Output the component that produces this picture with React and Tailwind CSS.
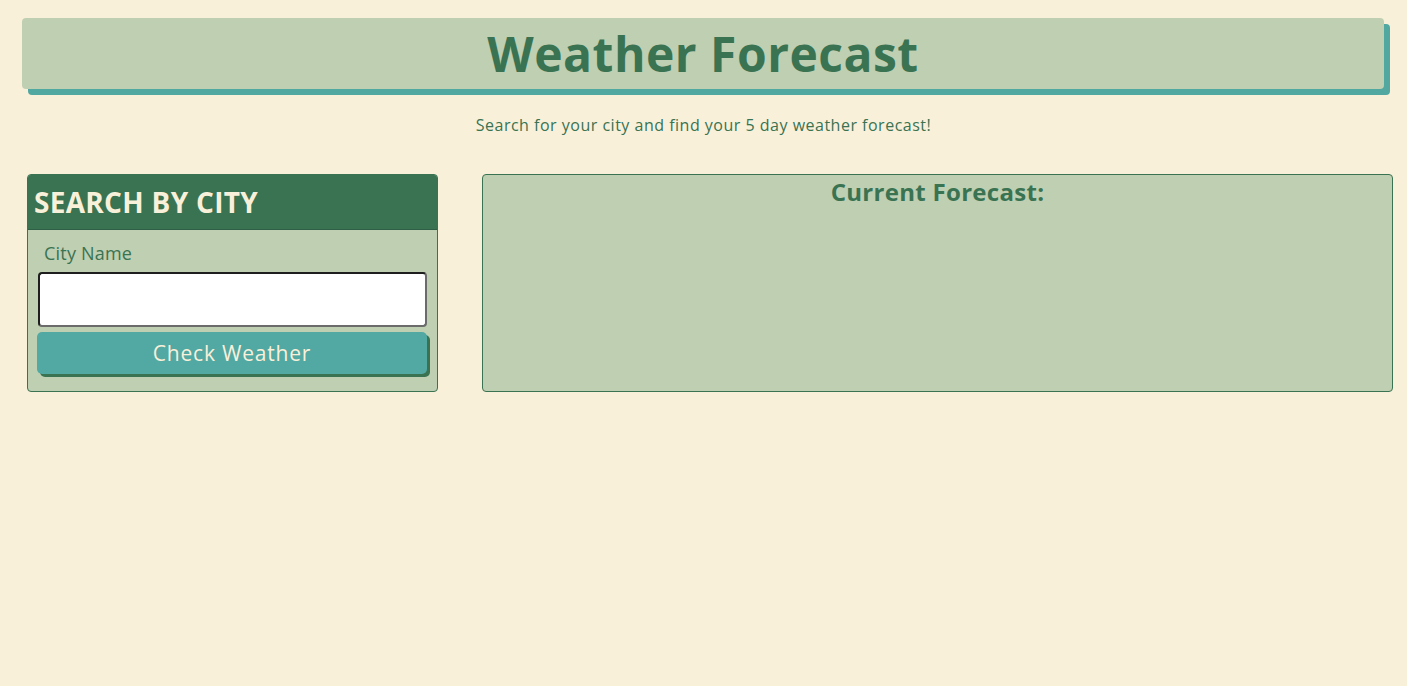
export default function App() {
  return (
    <div className="min-h-screen w-full bg-[#f9f0da] pt-[18px]" style={{ fontFamily: '"Open Sans", "Noto Sans", sans-serif' }}>
      <header className="ml-[22px] mr-[23px] h-[71px] rounded-[4px] bg-[#bfcfb2] shadow-[6px_6px_0_0_#50a8a0] flex items-center justify-center">
        <h1 className="text-[48px] font-bold text-[#3a7352] leading-none tracking-[0.5px]">Weather Forecast</h1>
      </header>
      <p className="mt-[26px] text-center text-[16px] text-[#3a7352] leading-[20px] tracking-[0.5px]">Search for your city and find your 5 day weather forecast!</p>
      <div className="mt-[39px] flex items-start pl-[27px] pr-[14px] gap-[44px]">
        <section className="w-[411px] h-[218px] shrink-0 rounded-[4px] border border-[#3a7352] bg-[#bfcfb2] overflow-hidden">
          <div className="h-[55px] bg-[#3a7352] border-b border-[#2f6045] flex items-center px-[6px]">
            <h2 className="text-[28px] font-bold text-[#f9f0da] leading-none tracking-[0.3px]">SEARCH BY CITY</h2>
          </div>
          <div className="px-[10px] pt-[12px]">
            <label className="block pl-[6px] text-[18px] text-[#3a7352] leading-[22px] tracking-[0.2px]">City Name</label>
            <input className="mt-[8px] block w-[389px] h-[55px] bg-white rounded-[4px] border-2 border-t-[#1e1e1e] border-l-[#1e1e1e] border-b-[#6b6b6b] border-r-[#6b6b6b] outline-none" />
            <button className="mt-[5px] block w-[390px] h-[42px] -ml-[1px] rounded-[5px] bg-[#52a8a2] shadow-[3px_3px_0_0_#3a7352] text-[21px] text-[#f9f0da] leading-none tracking-[0.8px]">Check Weather</button>
          </div>
        </section>
        <section className="flex-1 h-[218px] rounded-[4px] border border-[#3a7352] bg-[#bfcfb2]">
          <h3 className="pt-[3px] text-center text-[24px] font-bold text-[#3a7352] leading-[28px] tracking-[0.3px]">Current Forecast:</h3>
        </section>
      </div>
    </div>
  );
}
